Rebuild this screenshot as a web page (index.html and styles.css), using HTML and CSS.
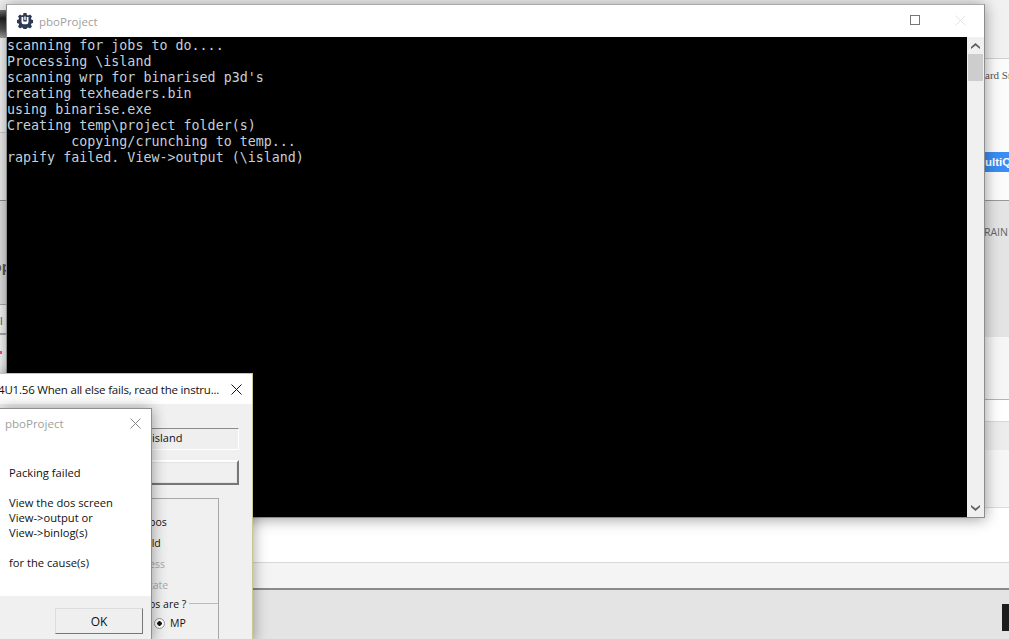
FILE: index.html
```html
<!DOCTYPE html>
<html lang="en">
<head>
<meta charset="utf-8">
<title>pboProject</title>
<link rel="stylesheet" href="styles.css">
</head>
<body>
<div class="desktop">
  <div class="page">
    <div class="strip">
      <div class="s s1"></div>
      <div class="s s2"></div>
      <div class="s s3"></div>
      <div class="s s4"></div>
      <div class="s s5"><span class="op">op</span></div>
      <div class="s s6"><span class="al">al</span></div>
      <div class="s s7"><i class="pink"></i></div>
    </div>
    <div class="main">
      <div class="b b1"></div>
      <div class="b b2"><span class="serif">ard Sn</span><span class="blue">ultiQu</span></div>
      <div class="b b3"><span class="bain">RAIN -</span></div>
      <div class="b b4"></div>
      <div class="b b5"></div>
      <div class="b b6"></div>
      <div class="b b7"></div>
      <div class="b b8"><span class="work">work</span></div>
      <div class="b b9"></div>
      <div class="b b10"><i class="darkbox"></i></div>
    </div>
  </div>

  <section class="win console">
    <header class="con-title">
      <svg class="gear" viewBox="0 0 16 16" width="16" height="16" aria-hidden="true">
        <path fill="#2c3a55" d="M6.5 0h3l.4 2 1.3.5L13 1.4l2 2-1.1 1.8.5 1.3 1.6.5v3l-1.6.4-.5 1.300 1.100 1.800-2 2-1.800-1.100-1.300.5-.4 1.700h-3l-.4-1.700-1.300-.5L3 15.600l-2-2 1.100-1.800-.5-1.300L0 10V7l1.600-.5.5-1.300L1 3.400l2-2 1.800 1.100 1.300-.5z"/>
        <path fill="#fff" d="M4.500 4h1.800v4.500h3.400V4h1.800v5a2.200 2.200 0 0 1-2.200 2.200H6.700A2.200 2.200 0 0 1 4.500 9z"/>
        <rect x="7.300" y="3.500" width="1.400" height="3.500" fill="#fff"/>
      </svg>
      <span class="con-name">pboProject</span>
      <span class="max"></span>
      <svg class="ctl-x" viewBox="0 0 11 11" width="11" height="11" aria-hidden="true"><path d="M.5.500l10 10M10.500.500l-10 10" stroke="#e4e4e4" fill="none"/></svg>
    </header>
    <div class="con-body">
      <pre class="term">scanning for jobs to do....
Processing \island
scanning wrp for binarised p3d's
creating texheaders.bin
using binarise.exe
Creating temp\project folder(s)
        copying/crunching to temp...
rapify failed. View-&gt;output (\island)</pre>
      <div class="scroll">
        <svg class="arrow" viewBox="0 0 9 6" width="9" height="6" aria-hidden="true"><path d="M0 4l4.500-4L9 4v2L4.500 2.500 0 6z" fill="#606060"/></svg>
        <div class="thumb"></div>
        <div class="track"></div>
        <svg class="arrow" viewBox="0 0 9 6" width="9" height="6" aria-hidden="true"><path d="M0 0l4.500 3.500L9 0v2L4.500 6 0 2z" fill="#606060"/></svg>
      </div>
    </div>
  </section>

  <section class="win back">
    <header class="back-title">
      <span class="back-name">4U1.56 When all else fails, read the instru...</span>
      <svg class="back-x" viewBox="0 0 11 11" width="11" height="11" aria-hidden="true"><path d="M.5.500l10 10M10.500.500l-10 10" stroke="#111" fill="none"/></svg>
    </header>
    <div class="back-body">
      <div class="field">island</div>
      <div class="bigbtn"></div>
      <div class="group">
        <div class="opt">pos</div>
        <div class="opt">ild</div>
        <div class="opt off">ess</div>
        <div class="opt off">tate</div>
        <div class="legend"><span>os are ?</span><i></i></div>
        <div class="radio"><i class="dot"></i><span>MP</span></div>
      </div>
    </div>
  </section>

  <section class="win front">
    <header class="front-title">
      <span>pboProject</span>
      <svg viewBox="0 0 11 11" width="11" height="11" aria-hidden="true"><path d="M.5.500l10 10M10.500.500l-10 10" stroke="#8a8a8a" fill="none"/></svg>
    </header>
    <div class="msg">
      <p>Packing failed</p>
      <p>View the dos screen<br>View-&gt;output or<br>View-&gt;binlog(s)</p>
      <p>for the cause(s)</p>
    </div>
    <footer class="foot"><button class="ok" type="button">OK</button></footer>
  </section>
</div>
</body>
</html>
```
FILE: styles.css
```css
* { box-sizing: border-box; }
html, body { margin: 0; padding: 0; }
body { width: 1009px; height: 639px; overflow: hidden; font-family: "Open Sans", "Noto Sans", sans-serif; }
.desktop { position: relative; width: 1009px; height: 639px; overflow: hidden; }

.page { display: flex; width: 100%; height: 100%; }
.strip { width: 7px; display: flex; flex-direction: column; }
.main { flex: 1; display: flex; flex-direction: column; position: relative; }

.s { overflow: hidden; position: relative; flex: none; }
.s1 { height: 10px; background: #f0f0f0; }
.s2 { height: 28px; background: linear-gradient(#777, #222 30%, #555 70%, #aaa); }
.s3 { height: 95px; background: #f6f6f6; border-bottom: 1px solid #d4d4d4; }
.s4 { height: 68px; background: #f0f0f0; border-bottom: 1px solid #8f8f8f; }
.s5 { height: 104px; background: #e2e2e2; border-bottom: 1px solid #aaa; }
.s6 { height: 30px; background: #f7f7f7; border-bottom: 2px solid #aaa; }
.s7 { height: 40px; background: #fafafa; }
.op { position: absolute; top: 56px; left: -7px; font: 700 14px "Open Sans", sans-serif; color: #5a5a5a; }
.al { position: absolute; top: 8px; left: -6px; font-size: 11px; color: #555; }
.pink { position: absolute; top: 16px; left: 0; width: 2px; height: 3px; background: #e58; }

.b { flex: none; position: relative; overflow: hidden; }
.b1 { height: 59px; background: #f1f1f1; border-bottom: 1px solid #cfcfcf; }
.b2 { height: 142px; background: #fbfbfb; border-bottom: 1px solid #999; }
.b3 { height: 136px; background: #e4e4e4; }
.b4 { height: 63px; background: #f6f6f6; border-bottom: 1px solid #b4b4b4; }
.b5 { height: 22px; background: #fff; border-bottom: 1px solid #d8d8d8; }
.b6 { height: 28px; background: #ececec; }
.b7 { height: 58px; background: #f6f6f6; border-bottom: 1px solid #dcdcdc; }
.b8 { height: 55px; background: #fff; border-bottom: 1px solid #d8d8d8; }
.b9 { height: 27px; background: #f4f4f4; border-bottom: 2px solid #8a8a8a; }
.b10 { height: 49px; background: #e4e4e4; }

.serif { position: absolute; top: 9px; left: 978px; font: 11px/14px "Liberation Serif", serif; color: #555; white-space: nowrap; }
.blue { position: absolute; top: 93px; left: 978px; width: 30px; height: 20px; background: #3b8cf4; color: #fff; font: 700 11.500px/20px "Liberation Sans", sans-serif; white-space: nowrap; overflow: hidden; }
.bain { position: absolute; top: 24px; left: 977px; font: 10.500px/14px "Open Sans", sans-serif; color: #666; white-space: nowrap; }
.work { position: absolute; top: -2px; left: 258px; font-size: 10px; line-height: 12px; color: #555; }
.darkbox { position: absolute; top: 14px; left: 995px; width: 8px; height: 27px; background: #1c1c1c; }

.win { position: absolute; box-shadow: 0 1px 14px rgba(0,0,0,.4); }

.console { left: 6px; top: 4px; width: 979px; height: 514px; border: 1px solid #8d8d8d; border-top-color: #aaa; background: #fff; display: flex; flex-direction: column; }
.con-title { height: 32px; flex: none; background: #fff; display: flex; align-items: center; padding-left: 10px; position: relative; }
.gear { flex: none; }
.con-name { margin-left: 6px; font-size: 11.500px; color: #a0a0a0; }
.max { position: absolute; left: 903px; top: 10px; width: 10px; height: 10px; border: 1px solid #777; }
.ctl-x { position: absolute; left: 948px; top: 10px; }
.con-body { flex: 1; display: flex; min-height: 0; }
.term { flex: 1; margin: 0; background: #000; color: #c4d0d8; font: 13.330px/16px "DejaVu Sans Mono", monospace; padding: 1px 0 0 0; overflow: hidden; }
.scroll { width: 17px; flex: none; background: #f0f0f0; display: flex; flex-direction: column; align-items: center; }
.arrow { flex: none; margin: 6px 0; }
.thumb { width: 15px; height: 27px; background: #cdcdcd; flex: none; margin-top: -1px; }
.track { flex: 1; }

.back { left: 0; top: 373px; width: 253px; height: 270px; background: #f0f0f0; border: solid #c9c98f; border-width: 1px 1px 0 0; display: flex; flex-direction: column; }
.back-title { height: 30px; flex: none; background: #fff; display: flex; align-items: center; justify-content: space-between; padding-right: 10px; overflow: hidden; }
.back-name { font-size: 11.500px; color: #111; white-space: nowrap; margin-left: -2px; letter-spacing: -.2px; }
.back-x { flex: none; }
.back-body { flex: 1; display: flex; flex-direction: column; align-items: flex-start; padding-left: 140px; position: relative; }
.field { margin-top: 24px; width: 99px; height: 22px; border: 1px solid; border-color: #8c8c8c #fff #fff #8c8c8c; background: #efefef; font-size: 11px; line-height: 18px; padding-left: 11px; color: #111; }
.bigbtn { margin-top: 10px; width: 99px; height: 25px; background: #f0f0f0; border: 2px solid; border-color: #fff #777 #777 #fff; box-shadow: inset 0 0 0 1px #e4e4e4; }
.group { margin-top: 13px; width: 79px; height: 160px; border: 1px solid #a8a8a8; padding-top: 15px; font-size: 10.500px; color: #111; }
.opt { height: 21px; line-height: 16px; padding-left: 8px; }
.off { color: #a8a8a8; }
.legend { display: flex; align-items: center; height: 20px; padding-left: 8px; margin-top: -4px; }
.legend span { white-space: nowrap; }
.legend i { flex: 1; height: 1px; background: #bbb; margin: 0 0 2px 3px; }
.radio { display: flex; align-items: center; padding-left: 13px; height: 18px; gap: 5px; }
.dot { width: 11px; height: 11px; border-radius: 50%; border: 1px solid #999; background: radial-gradient(circle, #111 0 2px, #fff 2.500px); }

.front { left: 0; top: 408px; width: 152px; height: 234px; background: #fff; border: solid #8f8f8f; border-width: 1px 1px 0 0; display: flex; flex-direction: column; }
.front-title { height: 29px; flex: none; display: flex; align-items: center; justify-content: space-between; padding: 0 10px 0 5px; font-size: 11.500px; color: #a0a0a0; }
.msg { height: 158px; flex: none; padding: 27px 0 0 9px; font-size: 11.200px; line-height: 15px; color: #111; }
.msg p { margin: 0 0 15px; }
.foot { flex: 1; background: #f0f0f0; display: flex; justify-content: flex-end; align-items: flex-start; padding: 12px 8px 0 0; }
.ok { width: 88px; height: 26px; background: #efefef; border: 1px solid; border-color: #ddd #777 #777 #ddd; font: 12px "Open Sans", sans-serif; color: #111; padding: 0; }
```
